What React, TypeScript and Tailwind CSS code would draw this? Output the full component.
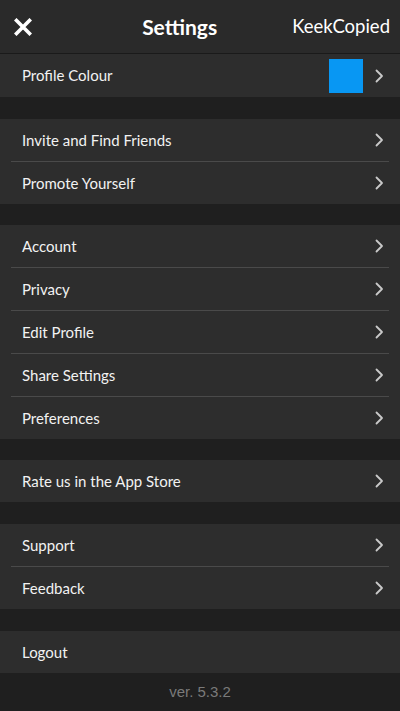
const font = { fontFamily: '"Lato", "Open Sans", sans-serif' };

function Chevron() {
  return (
    <svg width="9" height="14" viewBox="0 0 9 14" className="shrink-0">
      <polyline points="1.5,1.5 7,7 1.5,12.5" fill="none" stroke="#c9c9c9" strokeWidth="1.8" strokeLinecap="round" strokeLinejoin="round" />
    </svg>
  );
}

function Row({ label, last, chevron = true }: { label: string; last?: boolean; chevron?: boolean }) {
  return (
    <>
      <div className="flex h-[42px] items-center justify-between bg-[#2d2d2d] pl-[22px] pr-[16px]">
        <span className="text-[15px] text-[#f2f2f2]">{label}</span>
        {chevron && <Chevron />}
      </div>
      {!last && (
        <div className="bg-[#2d2d2d] px-[11px]">
          <div className="h-px bg-[#4a4a4a]" />
        </div>
      )}
    </>
  );
}

function Group({ items }: { items: string[] }) {
  return (
    <div>
      {items.map((it, i) => (
        <Row key={it} label={it} last={i === items.length - 1} />
      ))}
    </div>
  );
}

export default function App() {
  return (
    <div className="flex h-[711px] w-[400px] flex-col bg-[#1f1f1f]" style={font}>
      <div className="flex h-[54px] items-center border-b border-[#1a1a1a] bg-[#2a2a2a] pl-[14px] pr-[10px]">
        <svg width="18" height="18" viewBox="0 0 18 18" className="shrink-0">
          <path d="M2.5 2.5 L15.5 15.5 M15.5 2.5 L2.5 15.5" stroke="#fff" strokeWidth="3.6" strokeLinecap="square" />
        </svg>
        <div className="flex-1 pl-[35px] text-center text-[21px] font-bold text-white">Settings</div>
        <span className="text-[18.5px] text-white">KeekCopied</span>
      </div>

      <div className="flex h-[43px] items-center justify-between bg-[#2d2d2d] pl-[22px] pr-[16px]">
        <span className="text-[15px] text-[#f2f2f2]">Profile Colour</span>
        <div className="flex items-center gap-[12px]">
          <div className="h-[34px] w-[34px] bg-[#0897f3]" />
          <Chevron />
        </div>
      </div>

      <div className="h-[22px]" />
      <Group items={["Invite and Find Friends", "Promote Yourself"]} />
      <div className="h-[21px]" />
      <Group items={["Account", "Privacy", "Edit Profile", "Share Settings", "Preferences"]} />
      <div className="h-[21px]" />
      <Group items={["Rate us in the App Store"]} />
      <div className="h-[22px]" />
      <Group items={["Support", "Feedback"]} />
      <div className="h-[22px]" />
      <Row label="Logout" last chevron={false} />

      <div className="flex flex-1 items-center justify-center">
        <span className="text-[15px] text-[#7a7a7a]" style={{ fontFamily: '"Liberation Sans", Arial, sans-serif' }}>
          ver. 5.3.2
        </span>
      </div>
    </div>
  );
}
